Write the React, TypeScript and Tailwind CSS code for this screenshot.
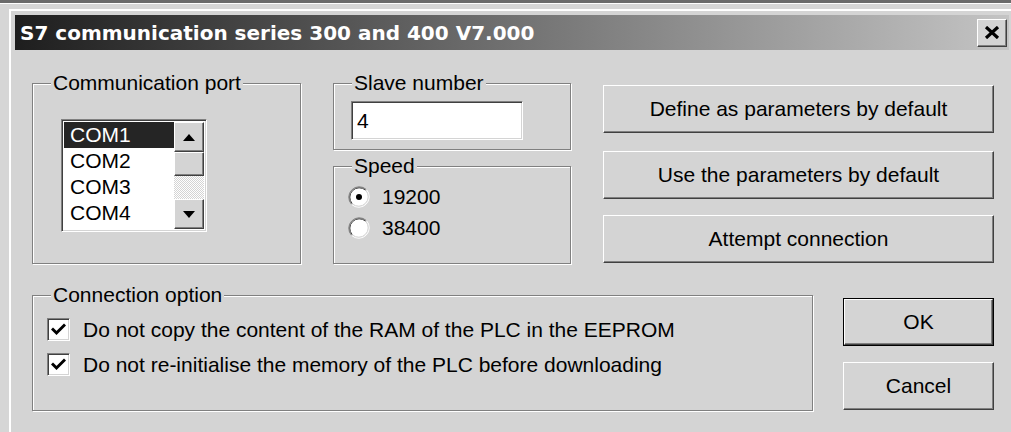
import type { ReactNode } from "react";

const ui = "font-['Liberation_Sans',Arial,sans-serif] text-[21px] text-black";

// Windows-classic raised push button
function PushButton({ children, className = "", primary = false }: { children: ReactNode; className?: string; primary?: boolean }) {
  const face = (
    <div className="flex h-full w-full items-center justify-center border-t border-l border-white border-r border-b border-r-[#404040] border-b-[#404040] bg-[#d4d4d4] shadow-[inset_-1px_-1px_0_#808080]">
      {children}
    </div>
  );
  if (primary) {
    return <div className={`border border-black ${className}`}>{face}</div>;
  }
  return <div className={className}>{face}</div>;
}

// Etched frame with a caption sitting on the top line
function GroupBox({ label, className = "", children }: { label: string; className?: string; children?: ReactNode }) {
  return (
    <div className={`relative border border-[#808080] shadow-[1px_1px_0_#ffffff,inset_1px_1px_0_#ffffff] ${className}`}>
      <span className="absolute -top-[13px] left-[18px] bg-[#d4d4d4] px-[2px] leading-[24px]">{label}</span>
      {children}
    </div>
  );
}

const sunken =
  "border-t border-l border-[#808080] border-r border-b border-r-white border-b-white shadow-[inset_1px_1px_0_#404040,inset_-1px_-1px_0_#d4d4d4]";

function Radio({ checked }: { checked?: boolean }) {
  return (
    <svg width="22" height="22" viewBox="0 0 22 22" className="shrink-0">
      <circle cx="11" cy="11" r="9.5" fill="#fff" />
      <path d="M3.58 18.42A10.5 10.5 0 0 1 18.42 3.58" stroke="#808080" fill="none" />
      <path d="M18.42 3.58A10.5 10.5 0 0 1 3.58 18.42" stroke="#fff" fill="none" />
      <path d="M4.29 17.71A9.5 9.5 0 0 1 17.71 4.29" stroke="#404040" fill="none" />
      <path d="M17.71 4.29A9.5 9.5 0 0 1 4.29 17.71" stroke="#d4d4d4" fill="none" />
      {checked && <circle cx="11" cy="11" r="3" fill="#000" />}
    </svg>
  );
}

function CheckBox() {
  return (
    <div className={`flex h-[23px] w-[23px] shrink-0 items-center justify-center bg-white ${sunken}`}>
      <svg width="15" height="13" viewBox="0 0 15 13">
        <path d="M2 6.5 L5.5 10 L13 2.5" stroke="#000" strokeWidth="3" fill="none" strokeLinecap="square" />
      </svg>
    </div>
  );
}

function ScrollArrow({ up }: { up?: boolean }) {
  return (
    <PushButton className="h-[30px] w-full">
      <svg width="12" height="7" viewBox="0 0 12 7">
        <path d={up ? "M0 7 L6 0 L12 7 Z" : "M0 0 L6 7 L12 0 Z"} fill="#000" />
      </svg>
    </PushButton>
  );
}

export default function App() {
  const ports = ["COM1", "COM2", "COM3", "COM4"];

  return (
    <div className={`h-[432px] w-[1011px] overflow-hidden bg-[#d6d6d6] ${ui}`}>
      <div className="h-[3px] bg-[#6b6b6b]" />
      <div className="h-px bg-white" />

      <div className="ml-[9px] mt-[5px] w-[1020px] border-t-2 border-l-2 border-white bg-[#d4d4d4] pl-[4px] pt-[4px] pb-[40px]">
        {/* title bar */}
        <div className="flex h-[35px] w-[994px] items-center justify-between bg-[linear-gradient(to_right,#1e1e1e,#c4c4c4)] pl-[5px] pr-[2px]">
          <span className="font-['DejaVu_Sans',sans-serif] text-[20px] font-bold text-white">
            S7 communication series 300 and 400 V7.000
          </span>
          <PushButton className="h-[28px] w-[30px]">
            <svg width="16" height="13" viewBox="0 0 16 13">
              <path d="M2 1 L14 12 M14 1 L2 12" stroke="#000" strokeWidth="3.2" />
            </svg>
          </PushButton>
        </div>

        <div className="pl-[17px] pt-[33px]">
          <div className="flex">
            <GroupBox label="Communication port" className="h-[181px] w-[269px] pl-[28px] pt-[35px]">
              <div className={`flex h-[113px] w-[146px] bg-white p-[2px] ${sunken}`}>
                <div className="flex-1">
                  {ports.map((p, i) => (
                    <div
                      key={p}
                      className={`h-[26px] pl-[6px] leading-[26px] ${i === 0 ? "bg-[#252525] text-white" : ""}`}
                    >
                      {p}
                    </div>
                  ))}
                </div>
                <div className="flex w-[30px] flex-col">
                  <ScrollArrow up />
                  <PushButton className="h-[24px] w-full">{null}</PushButton>
                  <div className="flex-1 bg-[repeating-conic-gradient(#ffffff_0%_25%,#d4d4d4_0%_50%)] bg-[length:2px_2px]" />
                  <ScrollArrow />
                </div>
              </div>
            </GroupBox>

            <div className="ml-[32px] flex w-[238px] flex-col gap-[16px]">
              <GroupBox label="Slave number" className="h-[67px] pl-[17px] pt-[17px]">
                <div className={`h-[39px] w-[172px] bg-white pl-[5px] leading-[37px] ${sunken}`}>4</div>
              </GroupBox>
              <GroupBox label="Speed" className="h-[98px] pl-[14px] pt-[14px]">
                <div className="flex h-[31px] items-center gap-[12px]">
                  <Radio checked />
                  <span>19200</span>
                </div>
                <div className="flex h-[31px] items-center gap-[12px]">
                  <Radio />
                  <span>38400</span>
                </div>
              </GroupBox>
            </div>

            <div className="ml-[32px] mt-[2px] flex w-[391px] flex-col">
              <PushButton className="h-[48px]">Define as parameters by default</PushButton>
              <PushButton className="mt-[18px] h-[48px]">Use the parameters by default</PushButton>
              <PushButton className="mt-[16px] h-[48px]">Attempt connection</PushButton>
            </div>
          </div>

          <div className="mt-[31px] flex">
            <GroupBox label="Connection option" className="h-[116px] w-[781px] pl-[14px] pt-[16px]">
              <div className="flex h-[35px] items-center gap-[13px]">
                <CheckBox />
                <span>Do not copy the content of the RAM of the PLC in the EEPROM</span>
              </div>
              <div className="flex h-[35px] items-center gap-[13px]">
                <CheckBox />
                <span>Do not re-initialise the memory of the PLC before downloading</span>
              </div>
            </GroupBox>

            <div className="ml-[30px] mt-[3px] flex w-[151px] flex-col gap-[16px]">
              <PushButton primary className="h-[48px]">OK</PushButton>
              <PushButton className="h-[48px]">Cancel</PushButton>
            </div>
          </div>
        </div>
      </div>
    </div>
  );
}
